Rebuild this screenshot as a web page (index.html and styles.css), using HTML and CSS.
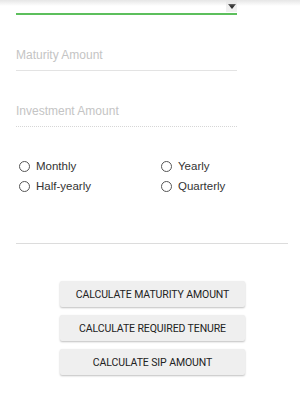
FILE: index.html
```html
<!DOCTYPE html>
<html>
<head>
<meta charset="utf-8">
<link rel="stylesheet" href="styles.css">
</head>
<body>
<div class="topshade"></div>
<div class="form">
  <div class="select">
    <span class="caret"><svg width="8" height="5" viewBox="0 0 8 5"><path d="M0 0H8L4 5Z" fill="#333"/></svg></span>
  </div>
  <div class="field"><span class="ph">Maturity Amount</span></div>
  <div class="field dotted"><span class="ph">Investment Amount</span></div>
  <div class="radios">
    <label class="radio"><span class="circle"></span>Monthly</label>
    <label class="radio"><span class="circle"></span>Yearly</label>
    <label class="radio"><span class="circle"></span>Half-yearly</label>
    <label class="radio"><span class="circle"></span>Quarterly</label>
  </div>
</div>
<div class="divider"></div>
<div class="buttons">
  <div class="btn">CALCULATE MATURITY AMOUNT</div>
  <div class="btn">CALCULATE REQUIRED TENURE</div>
  <div class="btn">CALCULATE SIP AMOUNT</div>
</div>
</body>
</html>
```
FILE: styles.css
```css
html, body { margin: 0; padding: 0; background: #fff; }
body { width: 300px; height: 395px; overflow: hidden; position: relative; font-family: "Liberation Sans", Arial, sans-serif; }
.topshade { position: absolute; left: 0; top: 0; width: 300px; height: 6px; background: linear-gradient(#e6e6e6, rgba(255,255,255,0)); }
.form { width: 221px; margin-left: 16px; }
.select { height: 13px; border-bottom: 2px solid #5cbf5c; display: flex; justify-content: flex-end; }
.caret { width: 11px; height: 12px; background: #f0f0f0; display: flex; align-items: center; justify-content: center; }
.field { height: 31px; margin-top: 24px; border-bottom: 1px solid #e3e3e3; display: flex; align-items: center; }
.field.dotted { border-bottom: 1px dotted #d6d6d6; }
.ph { font-size: 12px; color: #c4c4c4; }
.radios { display: grid; grid-template-columns: 142px 1fr; row-gap: 6px; margin-top: 32px; padding-left: 3px; }
.radio { display: flex; align-items: center; font-size: 11.5px; color: #333; height: 14px; }
.circle { width: 9px; height: 9px; border: 1.2px solid #555; border-radius: 50%; margin-right: 6px; box-sizing: content-box; }
.divider { margin: 50px 0 0 16px; width: 272px; height: 1px; background: #dcdcdc; }
.buttons { display: flex; flex-direction: column; align-items: center; margin-top: 37px; gap: 8px; }
.btn { width: 185px; height: 26px; margin-left: 5px; background: #efefef; border-radius: 2px; box-shadow: 0 1px 2px rgba(0,0,0,0.25); display: flex; align-items: center; justify-content: center; font-family: Roboto, "Liberation Sans", sans-serif; font-size: 10.5px; color: #222; letter-spacing: -0.1px; }
```
